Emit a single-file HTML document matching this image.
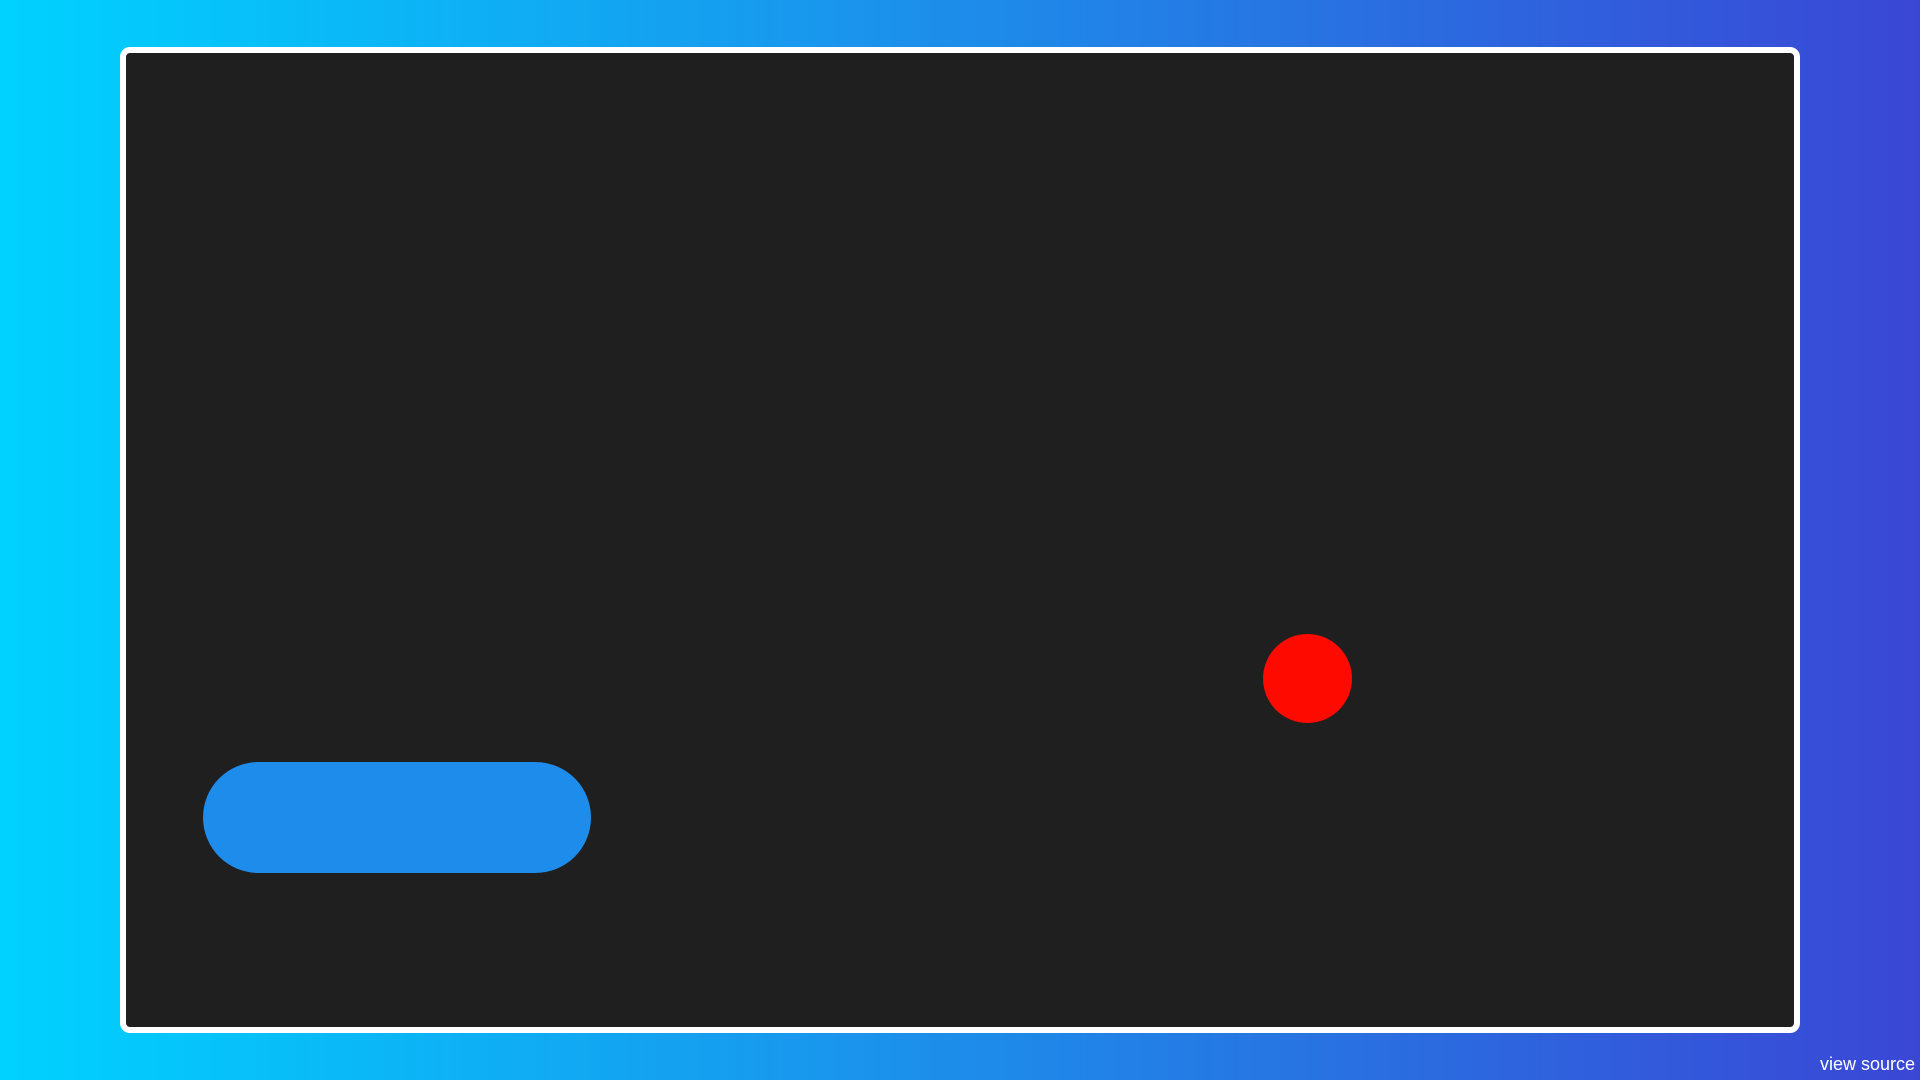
<!DOCTYPE html>
<html><head><style>
html,body{margin:0;padding:0;width:1920px;height:1080px;overflow:hidden}
body{background:linear-gradient(to right,#00d2ff,#3a47d5);position:relative;font-family:"Liberation Sans",sans-serif}
.frame{position:absolute;left:120px;top:47px;width:1668px;height:974px;border:6px solid #fff;border-radius:10px;background:#1f1f1f}
.pad{position:absolute;left:203px;top:762px;width:388px;height:111px;border-radius:56px;background:#1e8ceb}
.ball{position:absolute;left:1263px;top:634px;width:89px;height:89px;border-radius:50%;background:#ff0a00}
.vs{position:absolute;right:5px;bottom:5px;color:#fff;font-size:18px}
</style></head><body>
<div class="frame"></div>
<div class="pad"></div>
<div class="ball"></div>
<div class="vs">view source</div>
</body></html>
